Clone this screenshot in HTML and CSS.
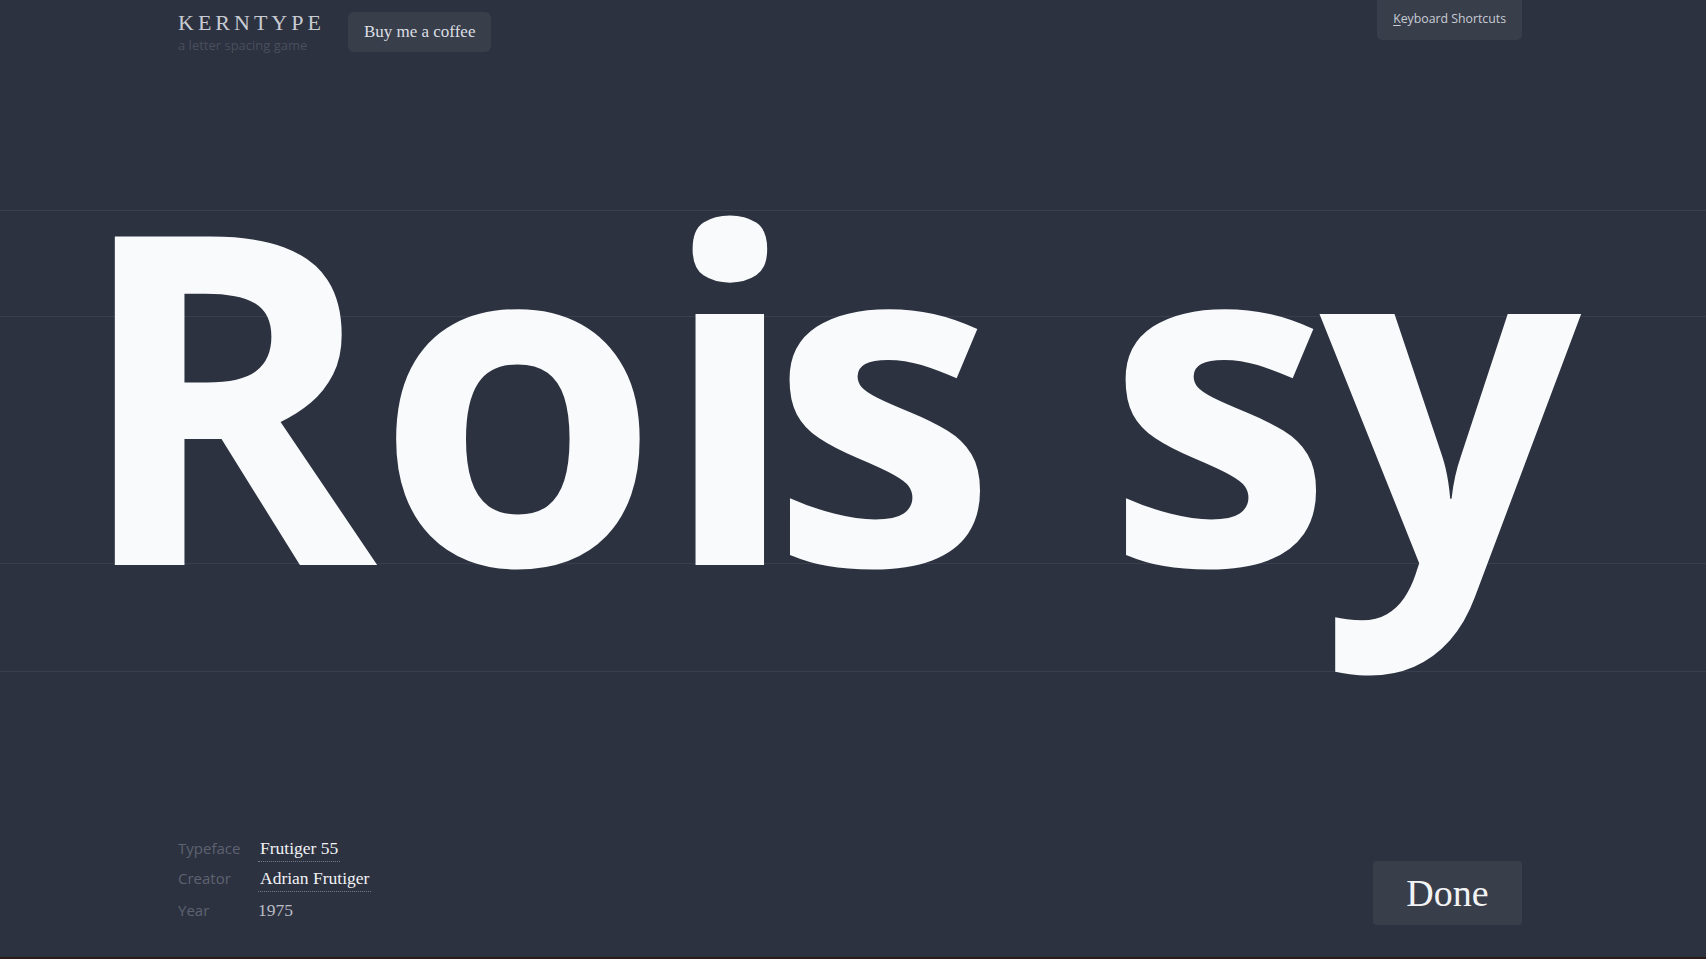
FILE: index.html
```html
<!DOCTYPE html>
<html lang="en">
<head>
<meta charset="utf-8">
<title>Kerntype</title>
<link rel="stylesheet" href="styles.css">
</head>
<body>
<div class="page">
  <header class="topbar">
    <div class="brand">
      <div class="logo">KERNTYPE</div>
      <div class="tagline">a letter spacing game</div>
    </div>
    <button class="btn btn-coffee" type="button">Buy me a coffee</button>
    <button class="btn btn-keys" type="button"><u>K</u>eyboard Shortcuts</button>
  </header>
  <main class="stage">
    <div class="word">
      <span class="glyph" style="margin-left: 73.5px; letter-spacing: -1.7px">R</span><span class="glyph" style="letter-spacing: -0.7px">o</span><span class="glyph" style="letter-spacing: -31.1px">i</span><span class="glyph">s</span><span class="glyph" style="margin-left: 107.4px; letter-spacing: -14.1px">s</span><span class="glyph">y</span>
    </div>
  </main>
  <footer class="bottombar">
    <dl class="meta">
      <dt>Typeface</dt><dd><a class="meta-link" href="#">Frutiger 55</a></dd>
      <dt>Creator</dt><dd><a class="meta-link" href="#">Adrian Frutiger</a></dd>
      <dt>Year</dt><dd class="meta-year">1975</dd>
    </dl>
    <button class="btn btn-done" type="button">Done</button>
  </footer>
</div>
</body>
</html>
```

FILE: styles.css
```css
html {
  background: #2a1d1a;
}

body {
  margin: 0;
  font-family: "Open Sans", "Liberation Sans", sans-serif;
}

.page {
  height: 957px;
  display: flex;
  flex-direction: column;
  background-color: #2d3240;
  background-image: linear-gradient(to bottom,
    transparent 0, transparent 210px,
    #3a3f4d 210px, #3a3f4d 211px,
    transparent 211px, transparent 316px,
    #3a3f4d 316px, #3a3f4d 317px,
    transparent 317px, transparent 563px,
    #3a3f4d 563px, #3a3f4d 564px,
    transparent 564px, transparent 671px,
    #3a3f4d 671px, #3a3f4d 672px,
    transparent 672px);
  overflow: hidden;
}

.topbar {
  display: flex;
  align-items: flex-start;
  height: 52px;
  padding: 0 184px 0 178px;
  flex: none;
}

.brand {
  padding-top: 11px;
}

.logo {
  font-family: "Liberation Serif", serif;
  font-size: 22px;
  line-height: 24px;
  letter-spacing: 4px;
  color: #c8cbd2;
}

.tagline {
  margin-top: 2px;
  font-size: 13px;
  line-height: 16px;
  color: #4a4f5e;
}

.btn {
  border: none;
  margin: 0;
  background: #393e4b;
  cursor: pointer;
}

.btn-coffee {
  margin-left: 23px;
  margin-top: 12px;
  height: 40px;
  padding: 0 16px;
  border-radius: 6px;
  font-family: "Liberation Serif", serif;
  font-size: 17px;
  line-height: 40px;
  color: #dcdee3;
}

.btn-keys {
  margin-left: auto;
  padding: 10px 16px 12px;
  border-radius: 0 0 5px 5px;
  font-family: "Open Sans", sans-serif;
  font-size: 12.3px;
  line-height: 18px;
  color: #c8ccd4;
}

.btn-keys u {
  text-decoration-thickness: 1px;
  text-underline-offset: 2px;
}

.stage {
  flex: 1;
}

.word {
  display: flex;
  margin-top: 105px;
  font-family: "Open Sans", sans-serif;
  font-weight: 700;
  font-size: 460px;
  line-height: 460px;
  color: #f8fafc;
  white-space: nowrap;
}

.bottombar {
  display: flex;
  justify-content: space-between;
  align-items: flex-end;
  padding: 0 184px 32px 178px;
  flex: none;
}

.meta {
  display: grid;
  grid-template-columns: 80px auto;
  grid-template-rows: 30px 30px 32px;
  align-items: end;
  margin: 0;
}

.meta dt {
  font-size: 15px;
  line-height: 30px;
  color: #5d6271;
}

.meta dd {
  margin: 0;
  font-family: "Liberation Serif", serif;
  font-size: 17.5px;
  line-height: 30px;
  color: #f2f3f5;
}

.meta-link {
  display: inline-block;
  line-height: 22px;
  padding: 0 2px 2px;
  border-bottom: 1px dotted #737886;
  color: #f2f3f5;
  text-decoration: none;
}

.meta dd.meta-year {
  color: #b9bcc5;
}

.btn-done {
  width: 149px;
  height: 64px;
  padding: 0;
  border-radius: 4px;
  font-family: "Liberation Serif", serif;
  font-size: 38px;
  line-height: 64px;
  color: #f2f3f5;
}
```
